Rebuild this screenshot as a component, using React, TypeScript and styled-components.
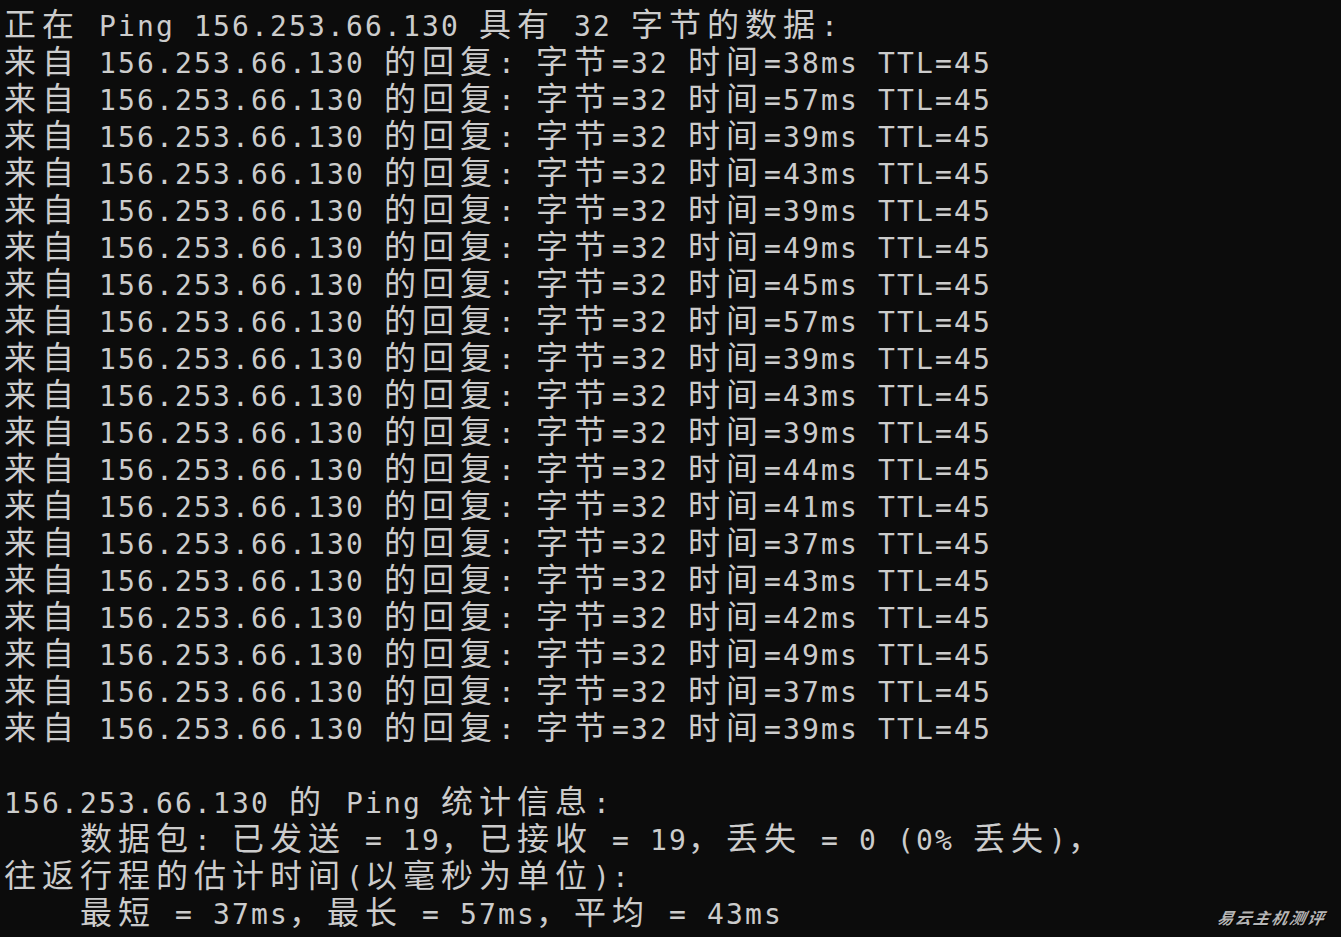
import React from "react";
import styled, { createGlobalStyle } from "styled-components";

const GlobalStyle = createGlobalStyle`
  html, body {
    margin: 0;
    padding: 0;
    background: #0c0c0c;
  }
`;

const Screen = styled.main`
  position: relative;
  width: 1341px;
  height: 937px;
  overflow: hidden;
  box-sizing: border-box;
  padding: 4px 0 0 3px;
  background: #0c0c0c;
  color: #cccccc;
`;

const Row = styled.div`
  display: flex;
  align-items: baseline;
  height: 37px;
`;

const Cell = styled.span<{ $wide: boolean }>`
  flex: none;
  box-sizing: border-box;
  width: ${(p) => (p.$wide ? 38 : 19)}px;
  padding-left: ${(p) => (p.$wide ? 1 : 0)}px;
  text-align: ${(p) => (p.$wide ? "left" : "center")};
  white-space: pre;
  line-height: 37px;
  font-family: ${(p) =>
    p.$wide
      ? '"Noto Sans CJK SC", "Noto Sans CJK JP", sans-serif'
      : '"DejaVu Sans Mono", "Liberation Mono", monospace'};
  font-size: ${(p) => (p.$wide ? 32 : 28)}px;
`;

const Watermark = styled.div`
  position: absolute;
  right: 15px;
  bottom: 8px;
  font-family: "Noto Sans CJK SC", sans-serif;
  font-size: 16px;
  font-weight: 700;
  font-style: italic;
  letter-spacing: 2px;
  color: #b5b5b5;
  text-shadow: 1px 1px 1px #000;
  transform: skewX(-12deg);
`;

const isWide = (ch: string) => /[\u2E80-\uFFEF]/.test(ch);

const TermLine: React.FC<{ text: string }> = ({ text }) => (
  <Row>
    {Array.from(text).map((ch, i) => (
      <Cell key={i} $wide={isWide(ch)}>
        {ch}
      </Cell>
    ))}
  </Row>
);

const IP = "156.253.66.130";
const times = [38, 57, 39, 43, 39, 49, 45, 57, 39, 43, 39, 44, 41, 37, 43, 42, 49, 37, 39];

const lines: string[] = [
  `正在 Ping ${IP} 具有 32 字节的数据:`,
  ...times.map((t) => `来自 ${IP} 的回复: 字节=32 时间=${t}ms TTL=45`),
  "",
  `${IP} 的 Ping 统计信息:`,
  "    数据包: 已发送 = 19，已接收 = 19，丢失 = 0 (0% 丢失)，",
  "往返行程的估计时间(以毫秒为单位):",
  "    最短 = 37ms，最长 = 57ms，平均 = 43ms",
];

export default function App() {
  return (
    <>
      <GlobalStyle />
      <Screen>
        {lines.map((l, i) => (
          <TermLine key={i} text={l} />
        ))}
        <Watermark>易云主机测评</Watermark>
      </Screen>
    </>
  );
}
